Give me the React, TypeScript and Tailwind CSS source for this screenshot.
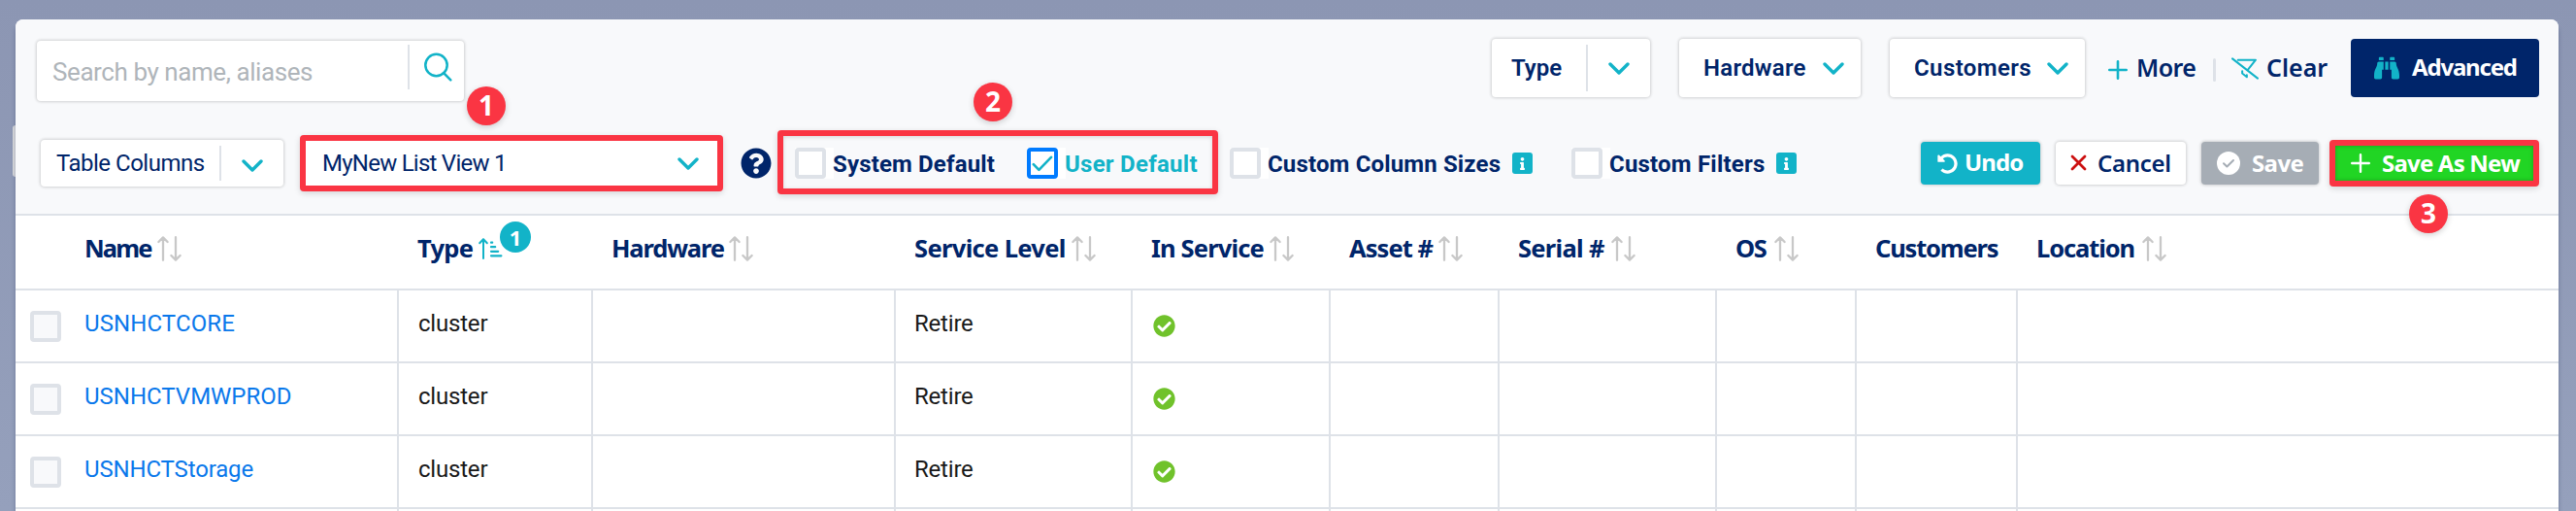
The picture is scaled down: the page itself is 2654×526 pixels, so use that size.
import type { ReactNode } from "react";
import { FaBinoculars, FaCheckCircle, FaInfo, FaQuestionCircle, FaUndoAlt } from "react-icons/fa";

function Chevron({ className = "" }: { className?: string }) {
  return (
    <svg viewBox="0 0 22 13" className={`h-[13px] w-[22px] shrink-0 ${className}`} fill="none" stroke="#12b3c8" strokeWidth="3.4" strokeLinecap="round" strokeLinejoin="round">
      <path d="M2 2l9 9 9-9" />
    </svg>
  );
}

function SortIcon() {
  return (
    <svg viewBox="0 0 25 26" className="h-[26px] w-[25px] shrink-0" fill="none" stroke="#c8c8c8" strokeWidth="2.3" strokeLinecap="round" strokeLinejoin="round">
      <path d="M6 24.8V1.5M1.4 6L6 1.4 10.6 6M19 1.2v23.3M14.4 20l4.6 4.6 4.6-4.6" />
    </svg>
  );
}

function SortedIcon() {
  return (
    <svg viewBox="0 0 25 22" className="h-[22px] w-[25px] shrink-0" fill="none" stroke="#12b3c8" strokeWidth="2" strokeLinecap="round" strokeLinejoin="round">
      <path d="M5 21V1.3M1.2 5.2L5 1.2l3.8 4" />
      <path d="M13 4.7h1.2M13 9.2h4.2M13 13.8h7.2M13 18.3h10.4" strokeWidth="2.2" />
    </svg>
  );
}

function Step({ n, className }: { n: number; className: string }) {
  return (
    <span className={`absolute flex size-10 items-center justify-center rounded-full bg-[#fa3543] pb-[2px] font-['Noto_Sans',sans-serif] text-[28px] leading-none font-bold text-white shadow-[0_2px_6px_rgba(0,0,0,0.18)] ${className}`}>
      {n}
    </span>
  );
}

function Check({ label, checked, className }: { label: string; checked?: boolean; className: string }) {
  return (
    <span className={`flex shrink-0 items-center whitespace-nowrap font-bold ${checked ? "text-[#12b3c8]" : ""} ${className}`}>
      <span className="-mr-px flex bg-white pr-2">
        <span className={`flex size-8 items-center justify-center rounded-[4px] border-4 bg-white ${checked ? "border-[#007bff]" : "border-[#dee2e8]"}`}>
          {checked && (
            <svg viewBox="0 0 22 17" className="h-[17px] w-[22px]" fill="none" stroke="#12b3c8" strokeWidth="2.6" strokeLinecap="round" strokeLinejoin="round">
              <path d="M1.8 9.2l5.6 5.6L20 1.8" />
            </svg>
          )}
        </span>
      </span>
      <span className="pt-px">{label}</span>
    </span>
  );
}

function Info() {
  return (
    <span className="flex h-[22px] w-[21px] shrink-0 items-center justify-center rounded-[3px] bg-[#12b3c8]">
      <FaInfo className="size-[13px] text-white" />
    </span>
  );
}

const card = "flex shrink-0 items-center rounded-[4px] bg-white shadow-[0_0_3px_1px_rgba(0,0,0,0.16)]";
const action = "flex h-11 shrink-0 items-center rounded-[4px] shadow-[0_0_3px_1px_rgba(0,0,0,0.16)]";
const fira = "font-['Noto_Sans',sans-serif] font-semibold whitespace-nowrap";

const columns: { label: string; width: string; icon?: ReactNode }[] = [
  { label: "Type", width: "w-[64px] tracking-[-0.7px]", icon: <SortedIcon /> },
  { label: "Hardware", width: "w-[122px] tracking-[-1.15px]", icon: <SortIcon /> },
  { label: "Service Level", width: "w-[163px] tracking-[-0.65px]", icon: <SortIcon /> },
  { label: "In Service", width: "w-[123px] tracking-[-0.85px]", icon: <SortIcon /> },
  { label: "Asset #", width: "w-[93px] tracking-[-0.95px]", icon: <SortIcon /> },
  { label: "Serial #", width: "w-[97px] tracking-[-0.7px]", icon: <SortIcon /> },
  { label: "OS", width: "w-[41px] tracking-[-1.5px]", icon: <SortIcon /> },
  { label: "Customers", width: "w-[130px] tracking-[-1.2px]" },
  { label: "Location", width: "w-[110px] tracking-[-1.1px]", icon: <SortIcon /> },
];

const rows = [
  { name: "USNHCTCORE", tracking: "tracking-[0.1px]" },
  { name: "USNHCTVMWPROD", tracking: "tracking-[0px]" },
  { name: "USNHCTStorage", tracking: "tracking-[-0.15px]" },
];

const grid = "grid grid-cols-[395px_200px_312px_244px_204px_174px_224px_144px_166px_557px]";

export default function App() {
  return (
    <div className="relative h-[526px] w-[2654px] overflow-hidden bg-linear-to-b from-[#8c96b3] to-[#95a0bc] pt-5 pl-4 font-['Roboto',sans-serif] text-[24px] leading-[32px] text-[#00256a]">
      <div className="absolute top-[129px] left-[13px] h-[53px] w-[6px] rounded-l-[3px] bg-[#dcdcde]" />
      <div className="relative h-[506px] w-[2620px] rounded-t-[8px] bg-white shadow-[0_6px_4px_rgba(60,70,110,0.45)]">
        <div className="h-[202px] rounded-t-[8px] border-b-2 border-[#dee2e8] bg-[#f8f9fb] pt-5">
          {/* Search and filters */}
          <div className="flex h-[64px] items-start pr-5 pl-[22px]">
            <div className={`${card} mt-[2px] h-[62px] w-[440px] pl-4`}>
              <span className="w-[366px] pt-[2px] text-[26px] tracking-[-0.42px] whitespace-nowrap text-[#afb5ba]">Search by name, aliases</span>
              <span className="mb-[8px] h-[46px] w-[2px] bg-[#dee2e8]" />
              <svg viewBox="0 0 30 30" className="mb-[9px] ml-[14px] size-[30px]" fill="none" stroke="#12b3c8" strokeWidth="2.5" strokeLinecap="round">
                <circle cx="13.5" cy="13" r="11.2" />
                <path d="M21 21l7.3 7.3" />
              </svg>
            </div>
            <div className="ml-auto flex h-[60px] items-center font-semibold">
              <div className={`${card} h-[60px] w-[163px] pl-5`}>
                <span className="w-[77px]">Type</span>
                <span className="h-12 w-[2px] bg-[#dee2e8]" />
                <Chevron className="ml-[21px]" />
              </div>
              <div className={`${card} ml-[30px] h-[60px] w-[187px] pl-[25px]`}>
                <span className="w-[123px] tracking-[0.25px]">Hardware</span>
                <Chevron />
              </div>
              <div className={`${card} ml-[30px] h-[60px] w-[201px] pl-[25px]`}>
                <span className="w-[137px] tracking-[0.4px]">Customers</span>
                <Chevron />
              </div>
              <svg viewBox="0 0 20 20" className="mt-[4px] ml-[24px] size-5" stroke="#12b3c8" strokeWidth="2.6" strokeLinecap="round">
                <path d="M10 1.3v17.4M1.3 10h17.4" />
              </svg>
              <span className={`${fira} -mt-[2px] ml-[9px] w-[79px] text-[25px] tracking-[-0.6px]`}>More</span>
              <span className="mt-[4px] h-6 w-[3px] rounded bg-[#dee2e8]" />
              <svg viewBox="0 0 83 68" className="ml-[16px] h-[23px] w-[28px]" fill="none" stroke="#12b3c8" strokeWidth="6" strokeLinecap="round" strokeLinejoin="round">
                <path d="M3 4l77 60M20 8h54L50 38M33 42v7l14 11v-6" />
              </svg>
              <span className={`${fira} -mt-[2px] ml-[8px] w-[87px] text-[25px] tracking-[0px]`}>Clear</span>
              <div className="flex h-[60px] w-[194px] items-center rounded-[4px] bg-[#00256a] pl-6">
                <FaBinoculars className="size-[26px] text-[#12b3c8]" />
                <span className={`${fira} ml-[13px] pb-[3px] !font-bold tracking-[-1.2px] text-white`}>Advanced</span>
              </div>
            </div>
          </div>

          {/* List view controls */}
          <div className="mt-[30px] flex h-[68px] items-center pr-5 pl-[26px]">
            <div className={`${card} h-12 w-[250px] pl-4`}>
              <span className="w-[168px] tracking-[-0.5px]">Table Columns</span>
              <span className="h-9 w-[2px] bg-[#dee2e8]" />
              <Chevron className="mt-1 ml-[21px]" />
            </div>
            <div className="relative ml-[17px] flex h-[58px] w-[436px] shrink-0 items-center rounded-[4px] border-6 border-[#fa3543] bg-white pl-[17px] shadow-[0_2px_6px_rgba(0,0,0,0.15)]">
              <span className="w-[366px] tracking-[-0.75px]">MyNew List View 1</span>
              <Chevron />
              <Step n={1} className="-top-[56px] left-[166px]" />
            </div>
            <FaQuestionCircle className="ml-[18px] size-8 shrink-0" />
            <div className="relative mb-[2px] ml-[6px] flex h-[66px] w-[454px] shrink-0 items-center rounded-[4px] border-6 border-[#fa3543] pt-[2px] pl-3 shadow-[0_2px_6px_rgba(0,0,0,0.15),inset_0_1px_4px_rgba(0,0,0,0.15)]">
              <Check label="System Default" className="w-[239px] tracking-[0.15px]" />
              <Check label="User Default" checked className="tracking-[0.25px]" />
              <Step n={2} className="-top-[55px] left-[196px]" />
            </div>
            <Check label="Custom Column Sizes" className="ml-3 w-[291px] tracking-[0.15px]" />
            <Info />
            <Check label="Custom Filters" className="ml-10 w-[211px] tracking-[0.2px]" />
            <Info />
            <div className="ml-auto flex items-center">
              <div className={`${action} w-[123px] bg-[#12b3c8] pl-[17px] text-white`}>
                <FaUndoAlt className="size-[21px]" />
                <span className={`${fira} ml-[7px] pb-[2px] !font-bold tracking-[-0.9px]`}>Undo</span>
              </div>
              <div className={`${action} ml-4 w-[134px] bg-white pl-[15px]`}>
                <svg viewBox="0 0 17 17" className="mb-[2px] size-[17px]" stroke="#cc1010" strokeWidth="2.8" strokeLinecap="round">
                  <path d="M2 2l13 13M15 2L2 15" />
                </svg>
                <span className={`${fira} ml-[11px] pb-[1px] tracking-[-0.3px]`}>Cancel</span>
              </div>
              <div className={`${action} ml-4 w-[121px] bg-[#a6adb5] pl-4 text-white`}>
                <svg viewBox="0 0 24 24" className="size-6" fill="none">
                  <circle cx="12" cy="12" r="12" fill="#fff" />
                  <path d="M7 12.2l3.4 3.3L17 9" stroke="#a6adb5" strokeWidth="2" strokeLinecap="round" strokeLinejoin="round" />
                </svg>
                <span className={`${fira} ml-3 pb-[1px] !font-bold tracking-[-0.6px]`}>Save</span>
              </div>
              <div className="relative ml-[11px] flex h-12 w-[216px] items-center rounded-[4px] border-6 border-[#fa3543] bg-[#21d524] pl-4 text-white shadow-[0_2px_6px_rgba(0,0,0,0.15),inset_0_0_4px_rgba(0,0,0,0.25)]">
                <svg viewBox="0 0 20 20" className="mb-[1px] size-5" stroke="#fff" strokeWidth="2.4" strokeLinecap="round">
                  <path d="M10 1.2v17.6M1.2 10h17.6" />
                </svg>
                <span className={`${fira} ml-3 pb-[1px] !font-bold tracking-[-0.8px]`}>Save As New</span>
                <Step n={3} className="top-[50px] left-[76px] z-10" />
              </div>
            </div>
          </div>
        </div>

        {/* Table header */}
        <div className={`${grid} h-[77px] border-b-2 border-[#dee2e8] font-bold`}>
          <div className="flex items-center pb-[7px] pl-[71px]">
            <span className="w-[75px] pb-[2px] font-['Noto_Sans',sans-serif] text-[25.5px] tracking-[-1.9px]">Name</span>
            <SortIcon />
          </div>
          {columns.map((c) => (
            <div key={c.label} className="relative flex items-center pb-[7px] pl-[18px]">
              <span className={`shrink-0 pb-[2px] pl-px font-['Noto_Sans',sans-serif] text-[25.5px] whitespace-nowrap ${c.width}`}>{c.label}</span>
              {c.icon}
              {c.label === "Type" && (
                <span className="absolute top-[6px] left-[104px] flex size-8 items-center justify-center rounded-full bg-[#12b3c8] pb-px font-['Noto_Sans',sans-serif] text-[22px] leading-none text-white">1</span>
              )}
            </div>
          ))}
        </div>

        {/* Table rows */}
        {rows.map((r) => (
          <div key={r.name} className={`${grid} h-[75px] divide-x-2 divide-[#dee2e8] border-b-2 border-[#dee2e8] text-[#1a1a1a]`}>
            <div className="flex items-center pl-[15px]">
              <span className="mt-[1px] size-8 rounded-[4px] border-4 border-[#dee2e8] bg-[#f8f9fb]" />
              <span className={`ml-6 pb-[6px] text-[#0a78eb] ${r.tracking}`}>{r.name}</span>
            </div>
            <div className="pt-[18px] pl-[20px] tracking-[-0.2px]">cluster</div>
            <div />
            <div className="pt-[18px] pl-[19px] tracking-[-0.2px]">Retire</div>
            <div className="pt-[25px] pl-[21px]">
              <FaCheckCircle className="size-[23px] text-[#70c22b]" />
            </div>
            <div />
            <div />
            <div />
            <div />
            <div />
          </div>
        ))}
        <div className={`${grid} h-1 divide-x-2 divide-[#dee2e8]`}>
          {Array.from({ length: 10 }, (_, i) => (
            <div key={i} />
          ))}
        </div>
      </div>
    </div>
  );
}
